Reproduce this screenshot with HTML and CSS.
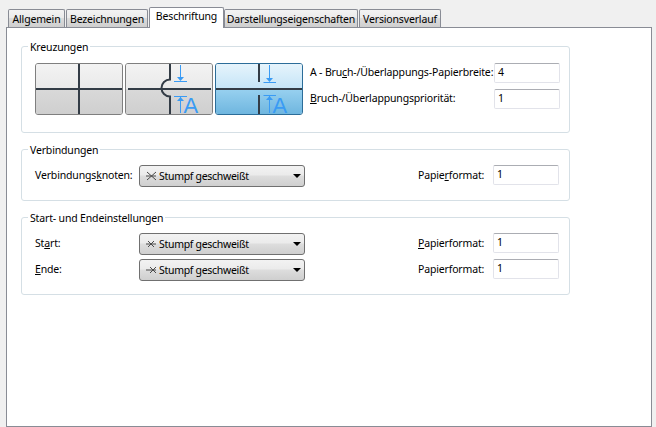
FILE: index.html
```html
<!DOCTYPE html>
<html lang="de">
<head>
<meta charset="utf-8">
<title>Beschriftung</title>
<link rel="stylesheet" href="styles.css">
</head>
<body>
<svg class="defs" width="0" height="0" aria-hidden="true">
  <defs>
    <linearGradient id="g-grey" x1="0" y1="0" x2="0" y2="1">
      <stop offset="0" stop-color="#f3f3f3"/><stop offset=".5" stop-color="#e9e9e9"/>
      <stop offset=".5" stop-color="#d9d9d9"/><stop offset="1" stop-color="#cfcfcf"/>
    </linearGradient>
    <linearGradient id="g-blue" x1="0" y1="0" x2="0" y2="1">
      <stop offset="0" stop-color="#e6f4fc"/><stop offset=".5" stop-color="#c4e4f7"/>
      <stop offset=".5" stop-color="#98d1f0"/><stop offset="1" stop-color="#6fb6df"/>
    </linearGradient>
  </defs>
</svg>
<nav class="tabs">
  <span class="tab t1">Allgemein</span>
  <span class="tab t2">Bezeichnungen</span>
  <span class="tab t3 active">Beschriftung</span>
  <span class="tab t4">Darstellungseigenschaften</span>
  <span class="tab t5">Versionsverlauf</span>
</nav>
<main class="panel">
  <fieldset class="group g1">
    <legend>Kreuzungen</legend>
    <div class="cross-row">
      <div class="imgbtns">
        <button class="imgbtn" type="button">
          <svg width="86" height="50" viewBox="1 1 86 50">
            <rect x="1" y="1" width="86" height="50" rx="2" fill="url(#g-grey)"/>
            <path class="ln" d="M1 26H87M44 1V51"/>
          </svg>
        </button>
        <button class="imgbtn" type="button">
          <svg width="86" height="50" viewBox="1 1 86 50">
            <rect x="1" y="1" width="86" height="50" rx="2" fill="url(#g-grey)"/>
            <path class="ln" d="M3 26H86M45 1V16.500A8.500 8.500 0 0 0 45 33.500V51"/>
            <path class="ar" d="M55.500 2V14M49 18.500H62M49 33.500H62M55.500 34V50"/>
            <path class="arh" d="M52 14H59L55.500 18ZM52 38H59L55.500 34Z"/>
            <text class="bigA" x="58.500" y="49.500">A</text>
          </svg>
        </button>
        <button class="imgbtn sel" type="button">
          <svg width="86" height="50" viewBox="1 1 86 50">
            <rect x="1" y="1" width="86" height="50" rx="2" fill="url(#g-blue)"/>
            <path class="ln" d="M1 26H87M44 1V19M44 32V51"/>
            <path class="ar" d="M54.500 2V15M48.500 19.500H61M48.500 32.500H61M54.500 33V50"/>
            <path class="arh" d="M51 15H58L54.500 19ZM51 37H58L54.500 33Z"/>
            <text class="bigA" x="57.500" y="49.500">A</text>
          </svg>
        </button>
      </div>
      <div class="form-cols">
        <label class="lbl">A - Bru<u>c</u>h-/Überlappungs-Papierbreite:</label>
        <span class="field">4</span>
        <label class="lbl"><u>B</u>ruch-/Überlappungspriorität:</label>
        <span class="field">1</span>
      </div>
    </div>
  </fieldset>

  <fieldset class="group g2">
    <legend>Verbindungen</legend>
    <div class="line-grid">
      <label class="lbl">Verbindungs<u>k</u>noten:</label>
      <div class="combo">
        <svg class="wi" width="11" height="10" viewBox="0 0 11 10"><path d="M1 1L10 9M10 1L1 9M0 5H10"/></svg>
        <span>Stumpf geschweißt</span><i class="caret"></i>
      </div>
      <label class="lbl papier">Papie<u>r</u>format:</label>
      <span class="field">1</span>
    </div>
  </fieldset>

  <fieldset class="group g3">
    <legend>Start- und Endeinstellungen</legend>
    <div class="line-grid">
      <label class="lbl">St<u>a</u>rt:</label>
      <div class="combo">
        <svg class="wi" width="11" height="10" viewBox="0 0 11 10"><path d="M2 2L8 8M8 2L2 8M0 5H10"/></svg>
        <span>Stumpf geschweißt</span><i class="caret"></i>
      </div>
      <label class="lbl papier"><u>P</u>apierformat:</label>
      <span class="field">1</span>
      <label class="lbl"><u>E</u>nde:</label>
      <div class="combo">
        <svg class="wi" width="11" height="10" viewBox="0 0 11 10"><path d="M4 2L10 8M10 2L4 8M0 5H10"/></svg>
        <span>Stumpf geschweißt</span><i class="caret"></i>
      </div>
      <label class="lbl papier">Papierformat:</label>
      <span class="field">1</span>
    </div>
  </fieldset>
</main>
</body>
</html>
```
FILE: styles.css
```css
* { box-sizing: border-box; }
html, body { margin: 0; height: 100%; }
body {
  background: #f0f0f0;
  font: 10.5px/13px "Noto Sans", Arial, sans-serif;
  letter-spacing: -0.16px;
  color: #000;
  overflow: hidden;
}
.defs { position: absolute; }

.tabs {
  display: flex;
  align-items: flex-end;
  height: 27px;
  padding-left: 8px;
}
.tab {
  height: 18px;
  margin-right: 1px;
  border: 1px solid #898c95;
  border-bottom: 0;
  border-radius: 2px 2px 0 0;
  background: linear-gradient(#f3f3f3, #ebebeb 45%, #dcdcdc 50%, #cfcfcf);
  text-align: center;
  line-height: 18px;
  white-space: nowrap;
}
.t1 { width: 57px; }
.t2 { width: 82px; }
.t3 { width: 75px; margin-right: 0; }
.t4 { width: 134px; }
.t5 { width: 82px; }
.tab.active {
  position: relative;
  height: 21px;
  margin-bottom: -1px;
  background: #fff;
  line-height: 17px;
  z-index: 1;
}

.panel {
  width: 646px;
  height: 400px;
  margin-left: 6px;
  padding: 12px 0 0 14px;
  background: #fff;
  border: 1px solid #898c95;
}
.group {
  width: 549px;
  margin: 0 0 10px;
  padding: 0 0 0 13px;
  border: 1px solid #d5dfe5;
  border-radius: 3px;
  min-inline-size: 0;
}
.group legend {
  height: 13px;
  margin-left: -7px;
  padding: 0 2px;
  line-height: 15px;
}
.g1 { height: 93px; padding-top: 10px; }
.g2 { height: 58px; padding-top: 9px; }
.g3 { height: 84px; padding-top: 9px; }

.cross-row { display: flex; align-items: flex-start; }
.imgbtns { display: flex; gap: 2px; margin-right: 7px; }
.imgbtn {
  display: block;
  width: 88px;
  height: 52px;
  padding: 0;
  border: 1px solid #7f7f7f;
  border-radius: 3px;
  background: #eee;
}
.imgbtn svg { display: block; overflow: visible; }
.imgbtn.sel { border-color: #2c6d99; }
.ln { fill: none; stroke: #333c46; stroke-width: 2; }
.ar { fill: none; stroke: #3a9bf4; stroke-width: 1; }
.arh { fill: #3a9bf4; }
.bigA { font: 22px "Liberation Sans", Arial, sans-serif; letter-spacing: 0; fill: #3a9bf4; }

.form-cols {
  display: grid;
  grid-template-columns: 184px 66px;
  grid-auto-rows: 20px;
  row-gap: 6px;
}
.line-grid {
  display: grid;
  grid-template-columns: 104px 166px 113px 75px 66px;
  grid-auto-rows: 22px;
  row-gap: 4px;
}
.lbl { line-height: 18px; white-space: nowrap; }
.line-grid .lbl { line-height: 20px; }
.papier { grid-column: 4; }
.field {
  width: 66px;
  height: 20px;
  padding-left: 3px;
  border: 1px solid #e2e3ea;
  border-top-color: #abadb3;
  border-radius: 2px;
  background: #fff;
  line-height: 16px;
}
.combo {
  display: flex;
  align-items: center;
  width: 166px;
  height: 22px;
  padding-left: 6px;
  border: 1px solid #707070;
  border-radius: 3px;
  background: linear-gradient(#f2f2f2, #ebebeb 45%, #dddddd 50%, #cfcfcf);
}
.combo span { flex: 1; margin-left: 2px; letter-spacing: -0.3px; padding-top: 1px; }
.wi { fill: none; stroke: #4a4a4a; stroke-width: 1; flex: none; }
.caret {
  width: 0;
  height: 0;
  margin-right: 3px;
  border-style: solid;
  border-width: 4px 4px 0;
  border-color: #000 transparent transparent;
}
```
